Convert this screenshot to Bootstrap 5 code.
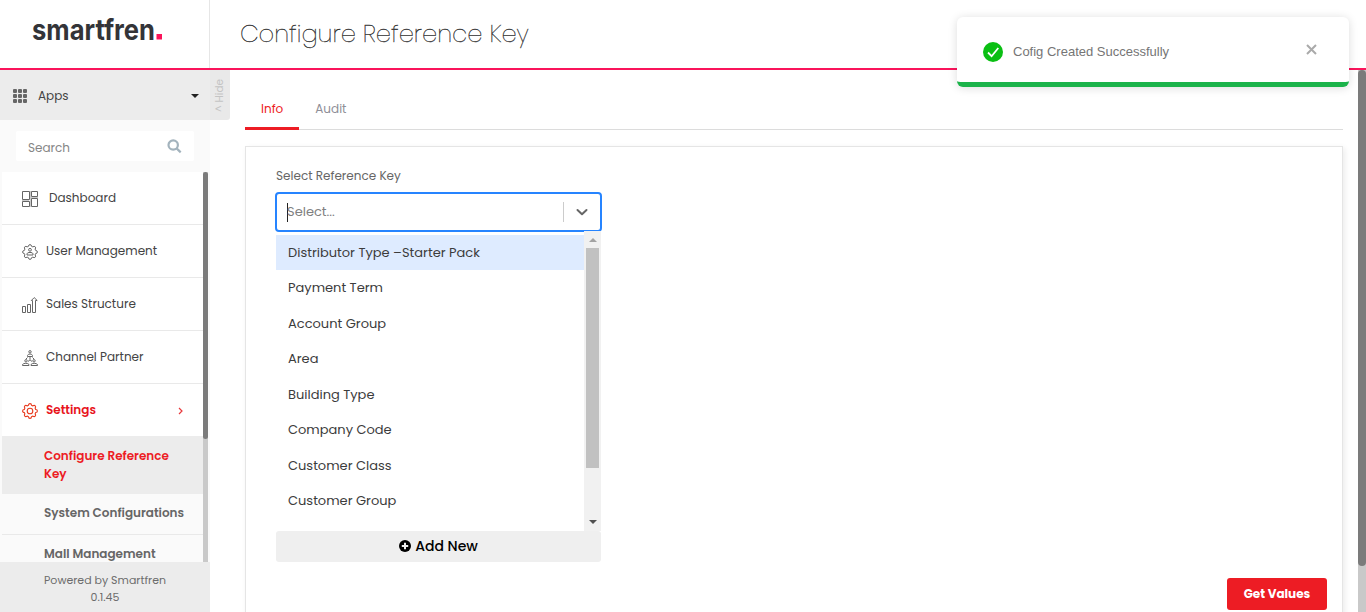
<!DOCTYPE html>
<html lang="en">
<head>
<meta charset="utf-8">
<meta name="viewport" content="width=device-width, initial-scale=1">
<title>Configure Reference Key</title>
<link href="https://cdn.jsdelivr.net/npm/bootstrap@5.3.0/dist/css/bootstrap.min.css" rel="stylesheet">
<style>
body{font-family:Poppins,Inter,"Open Sans",sans-serif;font-size:12px;line-height:18px;color:#444;background:#fff}
svg{display:block;flex:none}
.app-header{height:70px;border-bottom:2px solid #fa145b}
.brand-box{width:210px;border-right:1px solid #e6e6e6;padding:10px 0 0 32px}
.page-title{font-size:24.2px;line-height:30px;font-weight:200;color:#222;-webkit-text-stroke:.3px #333;padding:19px 0 0 30px}
.side{width:210px;background:#fafafa}
.apps-bar{height:50px;background:#ececec;padding:2px 11px 0 13px}
.apps-bar .apps-name{margin-left:11px}
.caret{border:4px solid transparent;border-top-color:#222;border-bottom:0}
.hide-tab{left:210px;top:0;width:20px;height:50px;background:#e9e9e9;border-radius:0 0 3px 0;color:#c4c4c4;font-size:10.5px}
.hide-tab span{writing-mode:vertical-rl;transform:rotate(180deg);line-height:20px}
.search-wrap{height:52px;padding:11px 16px 10px}
.search-box{height:30px;background:#fff;border-radius:2px;padding:0 12px;color:#868686}
.search-box span{padding-top:3px}
.side-menu{padding-left:2px}
.menu-list{width:201px;background:#fff}
.menu-row{height:53px;border-bottom:1px solid #e9e9e9;padding:0 19px 1px 20px}
.menu-row svg{margin:3px 8px 0 0}
.menu-row:first-child svg{margin-right:11px}
.menu-row.is-open{color:#e8141c;font-weight:600;border:0;height:52px}
.sub-row{padding:10px 20px 10px 42px;font-weight:600;background:#fafafa;color:#666;height:41px;border-bottom:1px solid #e9e9e9;white-space:nowrap}
.sub-row.is-current{height:58px;padding-top:11px;background:#ececec;color:#ed1c24;border:0}
.bar-track{width:5px;background:#c9c9c9}
.bar-thumb{height:267px;background:#7b7b7b;border-radius:3px}
.side-foot{height:50px;background:#ececec;font-size:11px;line-height:17px;padding-top:10px;color:#6c6c6c}
.tabs-row{margin:0 15px 0 35px;height:60px;border-bottom:1px solid #dcdcdc}
.tab-item{padding:30px 16px 0;height:60px;color:#8f8f98}
.tab-item.is-on{color:#ed1c24;border-bottom:3px solid #ed1c24}
.panel{margin:16px 15px 0 35px;border:1px solid #e5e5e5;height:500px;padding:20px 30px;box-shadow:2px 2px 6px rgba(0,0,0,.08)}
.field-label{color:#666}
.pick{width:327px;height:40px;margin:7px 0 0 -1px;border:2px solid #2684ff;border-radius:4px;color:#808080;font-size:13px}
.pick-cursor{width:1px;height:19px;background:#222;margin:0 -1px 0 10px}
.pick-sep{width:1px;height:20px;background:#ccc}
.drop{width:325px;height:300px;margin-top:-1px}
.opts{padding-top:4px;color:#3c3c3c;font-size:13px}
.opt{height:35.5px;padding-left:12px}
.opt.is-focus{background:#deebff;height:35px;margin-bottom:.5px}
.drop-bar{width:17px;background:#f1f1f1}
.drop-thumb{width:13px;height:220px;background:#c1c1c1}
.tri{border:4px solid transparent}
.tri-up{border-bottom-color:#a3a3a3;border-top:0;margin:7px 0 6px}
.tri-dn{border-top-color:#505050;border-bottom:0;margin:0 0 7px}
.add-btn{width:325px;height:31px;padding-bottom:2px;background:#efefef;border-radius:3px;color:#000;font-weight:500;font-size:14px}
.get-btn{width:100px;height:32px;background:#ed1c24;color:#fff;border-radius:3px;font-weight:700;margin:16px -15px 0 0}
.page-bar{width:8px;background:#c9c9c9}
.page-bar div{height:496px;background:#7b7b7b;border-radius:4px}
.note{left:957px;top:17px;width:392px;height:70px;background:#fff;border-radius:6px;box-shadow:0 1px 10px rgba(0,0,0,.14);border-bottom:5px solid #1bb34a;padding:4px 32px 0 26px;font-family:"Liberation Sans",sans-serif;font-size:13px;color:#757575;z-index:5}
.note-ok{margin-right:10px}
.note-close{margin-bottom:5px}
</style>
</head>
<body class="vh-100 overflow-hidden d-flex flex-column position-relative">
<header class="app-header d-flex flex-shrink-0">
  <div class="brand-box"><svg width="140" height="44"><text x="0" y="29.500" font-family="Inter, sans-serif" font-weight="700" font-size="28.500" fill="#333438" textLength="123" lengthAdjust="spacingAndGlyphs">smartfren</text><rect x="124.500" y="24" width="5.500" height="5.500" fill="#fa145b"/></svg></div>
  <h1 class="page-title mb-0">Configure Reference Key</h1>
</header>
<div class="d-flex flex-grow-1 overflow-hidden">
  <aside class="side d-flex flex-column flex-shrink-0 position-relative">
    <div class="apps-bar d-flex align-items-center flex-shrink-0">
      <svg width="14" height="14" fill="#666"><g id="r"><rect width="4" height="4" rx="1"/><rect x="5" width="4" height="4" rx="1"/><rect x="10" width="4" height="4" rx="1"/></g><use href="#r" y="5"/><use href="#r" y="10"/></svg>
      <span class="apps-name me-auto">Apps</span><span class="caret"></span>
    </div>
    <div class="hide-tab position-absolute d-flex justify-content-center align-items-center"><span>^ Hide</span></div>
    <div class="search-wrap flex-shrink-0"><div class="search-box d-flex align-items-center justify-content-between"><span>Search</span>
      <svg width="15" height="15" viewBox="0 0 15 15" fill="none" stroke="#a3b3bd" stroke-width="2.200"><circle cx="6.200" cy="6" r="4.700"/><path d="M9.600 9.400L13.700 13.400"/></svg></div></div>
    <div class="side-menu d-flex flex-grow-1 overflow-hidden">
      <nav class="menu-list flex-shrink-0">
        <div class="menu-row d-flex align-items-center"><svg width="16" height="16" fill="none" stroke="#666"><path d="M8.500 0v16M0 9.500h7M9 6.500h7" stroke="#ccc"/><path d="M.5.5h7v8h-7zM9.500 .5h6v5h-6zM.5 10.500h7v5h-7zM9.500 7.500h6v8h-6z"/></svg><span>Dashboard</span></div>
        <div class="menu-row d-flex align-items-center"><svg width="16" height="16" viewBox="0 0 16 16" fill="none" stroke="#666" stroke-linejoin="round"><path d="M8 .6Q9.500 .6 9.500 2.300L10.900 2.900Q12.200 1.800 13.200 2.800T13.100 5.100L13.700 6.500Q15.400 6.500 15.400 8T13.700 9.500L13.100 10.900Q14.200 12.200 13.200 13.200T10.900 13.100L9.500 13.700Q9.500 15.400 8 15.400T6.500 13.700L5.100 13.100Q3.800 14.200 2.800 13.200T2.900 10.900L2.300 9.500Q.6 9.500 .6 8T2.300 6.500L2.900 5.100Q1.800 3.800 2.800 2.800T5.100 2.900L6.500 2.300Q6.500 .6 8 .6z"/><circle cx="8" cy="5.800" r="1.400"/><path d="M5 11V9.800Q5.500 8.500 7 8.500h2q1.500 0 2 1.300V11z"/></svg><span>User Management</span></div>
        <div class="menu-row d-flex align-items-center"><svg width="16" height="16" viewBox="0 0 16 16" fill="none" stroke="#666"><path d="M.5 9.500h3v6h-3zM5.500 7.500h3v8h-3zM10.500 15.500V3.500H9.300L12.200 .6l3 2.900h-1.700v12z"/></svg><span>Sales Structure</span></div>
        <div class="menu-row d-flex align-items-center"><svg width="16" height="16" viewBox="0 0 16 16" fill="none" stroke="#666"><circle cx="8" cy="1.800" r="1.200"/><path d="M5.500 6.500V5.500Q6 4 8 4t2.500 1.500v1zM8 6.500v3M5.500 7.500L4 9M10.500 7.500L12 9M6 11.500L8 9.800l2 1.700"/><circle cx="4" cy="10.800" r="1.200"/><circle cx="12" cy="10.800" r="1.200"/><path d="M.5 15.500v-1Q1.500 13.300 3.800 13.300T7 14.500v1zM9 15.500v-1q1-1.200 3.200-1.200t3.300 1.200v1z"/></svg><span>Channel Partner</span></div>
        <div class="menu-row is-open d-flex align-items-center"><svg width="16" height="16" viewBox="0 0 16 16" fill="none" stroke="#e8391c" stroke-width="1.100" stroke-linejoin="round"><path d="M8 .6Q9.500 .6 9.500 2.300L10.900 2.900Q12.200 1.800 13.200 2.800T13.100 5.100L13.700 6.500Q15.400 6.500 15.400 8T13.700 9.500L13.100 10.900Q14.200 12.200 13.200 13.200T10.900 13.100L9.500 13.700Q9.500 15.400 8 15.400T6.500 13.700L5.100 13.100Q3.800 14.200 2.800 13.200T2.900 10.900L2.300 9.500Q.6 9.500 .6 8T2.300 6.500L2.900 5.100Q1.800 3.800 2.800 2.800T5.100 2.900L6.500 2.300Q6.500 .6 8 .6z"/><circle cx="8" cy="8" r="2.800"/></svg><span class="me-auto">Settings</span><svg class="me-0" width="6" height="8" fill="none" stroke="#e8393c" stroke-width="1.200"><path d="M1 1l3 3-3 3"/></svg></div>
        <div class="sub-row is-current">Configure Reference<br>Key</div>
        <div class="sub-row">System Configurations</div>
        <div class="sub-row">Mall Management</div>
      </nav>
      <div class="bar-track"><div class="bar-thumb"></div></div>
    </div>
    <footer class="side-foot text-center flex-shrink-0">Powered by Smartfren<br>0.1.45</footer>
  </aside>
  <main class="flex-grow-1 overflow-hidden">
    <div class="tabs-row d-flex"><div class="tab-item is-on">Info</div><div class="tab-item">Audit</div></div>
    <section class="panel">
      <div class="field-label">Select Reference Key</div>
      <div class="pick d-flex align-items-center"><span class="pick-cursor"></span><span class="me-auto">Select...</span><span class="pick-sep"></span>
        <svg class="mx-2 px-1" width="20" height="20" viewBox="0 0 12 12" fill="none" stroke="#666" stroke-width="2" stroke-linecap="round" stroke-linejoin="round"><path d="M1.500 4L6 8.200 10.500 4"/></svg></div>
      <div class="drop d-flex">
        <div class="opts flex-grow-1 overflow-hidden">
          <div class="opt is-focus d-flex align-items-center">Distributor Type –Starter Pack</div>
          <div class="opt d-flex align-items-center">Payment Term</div>
          <div class="opt d-flex align-items-center">Account Group</div>
          <div class="opt d-flex align-items-center">Area</div>
          <div class="opt d-flex align-items-center">Building Type</div>
          <div class="opt d-flex align-items-center">Company Code</div>
          <div class="opt d-flex align-items-center">Customer Class</div>
          <div class="opt d-flex align-items-center">Customer Group</div>
        </div>
        <div class="drop-bar d-flex flex-column align-items-center"><span class="tri tri-up"></span><div class="drop-thumb"></div><span class="tri tri-dn mt-auto"></span></div>
      </div>
      <div class="add-btn d-flex align-items-center justify-content-center"><svg class="me-1" width="12" height="12" viewBox="0 0 12 12"><circle cx="6" cy="6" r="6"/><path d="M6 2.800v6.400M2.800 6h6.400" stroke="#efefef" stroke-width="2"/></svg>Add New</div>
      <div class="get-btn ms-auto d-flex align-items-center justify-content-center">Get Values</div>
    </section>
  </main>
  <div class="page-bar flex-shrink-0"><div></div></div>
</div>
<div class="note position-absolute d-flex align-items-center">
  <svg class="note-ok" width="20" height="20" viewBox="0 0 20 20"><circle cx="10" cy="10" r="10" fill="#0abf13"/><path d="M5 10.500l3.600 3.700L15.300 6" fill="none" stroke="#fff" stroke-width="1.800"/></svg>
  <span class="me-auto">Cofig Created Successfully</span>
  <svg class="note-close" width="11" height="11" stroke="#aaa" stroke-width="2"><path d="M1 1l9 9M10 1l-9 9"/></svg>
</div>
<script src="https://cdn.jsdelivr.net/npm/bootstrap@5.3.0/dist/js/bootstrap.bundle.min.js"></script>
</body>
</html>
